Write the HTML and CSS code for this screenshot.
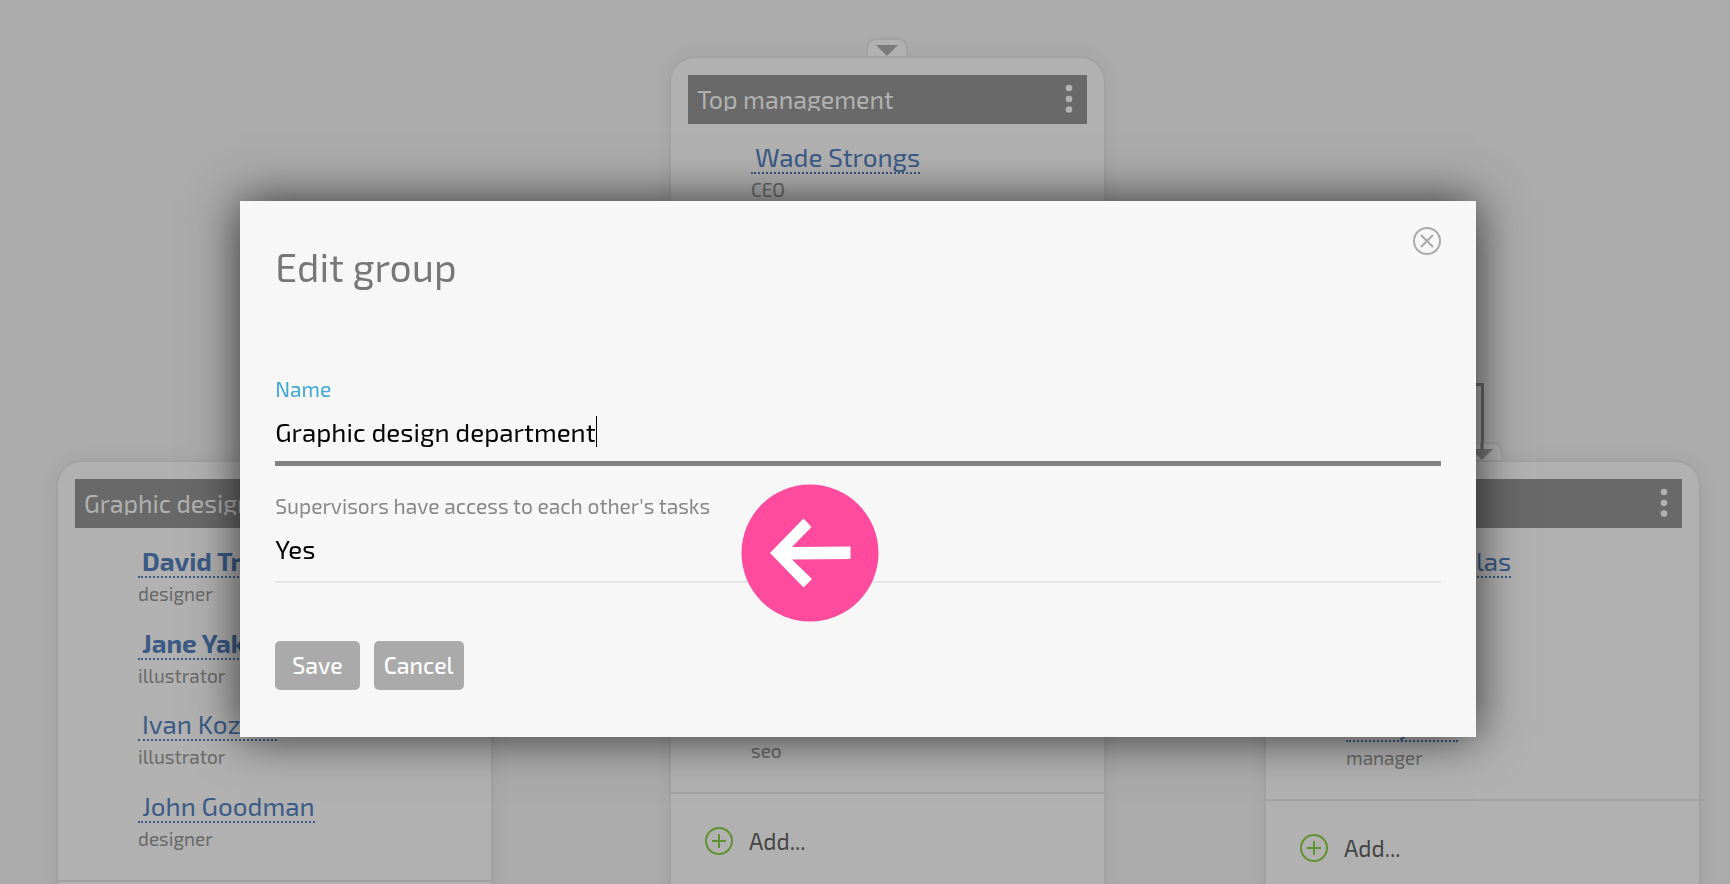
FILE: index.html
```
<!DOCTYPE html>
<html lang="en">
<head>
<meta charset="utf-8">
<meta name="viewport" content="width=device-width, initial-scale=1">
<title>Edit group</title>
<link rel="stylesheet" href="styles.css">
</head>
<body>
<main class="chart">
  <div class="connector"></div>

  <section class="group group-top">
    <svg class="group-tab" viewBox="0 0 42 18" aria-hidden="true"><path class="tab-shape" d="M1 18V11Q1 1 11 1H31Q41 1 41 11V18"/><path class="tab-arrow" d="M10 7H32L21 18Z"/></svg>
    <header class="group-head">
      <h2 class="group-title">Top management</h2>
      <button class="menu" type="button" aria-label="Group menu"><svg width="8" height="30" viewBox="0 0 8 30"><circle cx="4" cy="4" r="3.3"/><circle cx="4" cy="15" r="3.3"/><circle cx="4" cy="25.500" r="3.3"/></svg></button>
    </header>
    <ul class="members members-long">
      <li class="member"><a class="name" href="#">Wade Strongs</a><span class="role">CEO</span></li>
      <li class="member"><span class="role">seo</span></li>
    </ul>
    <button class="add" type="button"><svg width="28" height="28" viewBox="0 0 28 28" aria-hidden="true"><circle cx="14" cy="14" r="13"/><path d="M14 7V21M7 14H21"/></svg>Add...</button>
  </section>

  <section class="group group-left">
    <header class="group-head">
      <h2 class="group-title">Graphic design department</h2>
    </header>
    <ul class="members">
      <li class="member"><a class="name lead" href="#">David Tretiak</a><span class="role">designer</span></li>
      <li class="member"><a class="name lead" href="#">Jane Yakovleva</a><span class="role">illustrator</span></li>
      <li class="member"><a class="name" href="#">Ivan Kozlov</a><span class="role">illustrator</span></li>
      <li class="member"><a class="name" href="#">John Goodman</a><span class="role">designer</span></li>
    </ul>
    <div class="add"></div>
  </section>

  <section class="group group-right">
    <svg class="group-tab" viewBox="0 0 42 18" aria-hidden="true"><path class="tab-shape" d="M1 18V11Q1 1 11 1H31Q41 1 41 11V18"/><path class="tab-line" d="M21 0V8"/><path class="tab-arrow" d="M10 7H32L21 18Z"/></svg>
    <header class="group-head">
      <h2 class="group-title"></h2>
      <button class="menu" type="button" aria-label="Group menu"><svg width="8" height="30" viewBox="0 0 8 30"><circle cx="4" cy="4" r="3.3"/><circle cx="4" cy="15" r="3.3"/><circle cx="4" cy="25.500" r="3.3"/></svg></button>
    </header>
    <ul class="members members-mid">
      <li class="member"><a class="name" href="#">Helen Nicolas</a></li>
      <li class="member"><a class="name" href="#">Mary Lee</a><span class="role">manager</span></li>
    </ul>
    <button class="add" type="button"><svg width="28" height="28" viewBox="0 0 28 28" aria-hidden="true"><circle cx="14" cy="14" r="13"/><path d="M14 7V21M7 14H21"/></svg>Add...</button>
  </section>
</main>

<div class="overlay">
  <form class="dialog" role="dialog" aria-labelledby="dialog-title">
    <header class="dialog-head">
      <h1 class="dialog-title" id="dialog-title">Edit group</h1>
      <button class="close" type="button" aria-label="Close"><svg width="28" height="28" viewBox="0 0 28 28"><circle cx="14" cy="14" r="13"/><path d="M8 8L20 20M20 8L8 20"/></svg></button>
    </header>
    <div class="field field-active">
      <label class="label" for="group-name">Name</label>
      <input class="control control-text" id="group-name" type="text" value="Graphic design department">
    </div>
    <div class="field">
      <label class="label" for="group-access">Supervisors have access to each other's tasks</label>
      <select class="control control-select" id="group-access"><option>Yes</option></select>
      <svg class="pointer" viewBox="0 0 138 138" aria-hidden="true"><circle cx="69" cy="69" r="68.500"/><path d="M29 69L62.500 34.500L70.500 43L51 63L109.500 62.500V75L51 75.500L71 95L62.500 103.500Z"/></svg>
    </div>
    <footer class="actions">
      <button class="btn btn-save" type="submit">Save</button>
      <button class="btn" type="button">Cancel</button>
    </footer>
  </form>
</div>
</body>
</html>
```
FILE: styles.css
```
* { box-sizing: border-box; }

body {
  margin: 0;
  min-height: 100vh;
  overflow: hidden;
  background: #ababab;
  font-family: "Exo 2", "Open Sans", "Noto Sans", sans-serif;
  color: #444;
}

button, input, select { font: inherit; }
button { border: 0; background: none; padding: 0; cursor: pointer; }

.chart { position: relative; height: 100vh; overflow: hidden; }

.connector {
  position: absolute;
  left: 888px;
  top: 383px;
  width: 596px;
  height: 60px;
  border: solid #696969;
  border-width: 3px 3px 0 0;
}

.group {
  position: absolute;
  width: 437px;
  padding-bottom: 48px;
  background: #b1b1b1;
  border: 2px solid #a2a2a2;
  border-radius: 26px;
  box-shadow: 0 0 20px rgba(0, 0, 0, .05);
}
.group-top { left: 669px; top: 56px; }
.group-left { left: 56px; top: 460px; }
.group-right { left: 1264px; top: 460px; }

.group-tab {
  position: absolute;
  left: 195px;
  top: -20px;
  width: 42px;
  height: 18px;
}
.tab-shape { fill: #b1b1b1; stroke: #a2a2a2; stroke-width: 2; }
.tab-arrow { fill: #7a7a7a; }
.tab-line { stroke: #696969; stroke-width: 3; }

.group-head {
  display: flex;
  align-items: center;
  justify-content: space-between;
  height: 49px;
  margin: 17px 17px 0;
  padding: 0 14px 2px 9px;
  background: #696969;
}
.group-title {
  margin: 0;
  overflow: hidden;
  white-space: nowrap;
  font-size: 25px;
  font-weight: 400;
  line-height: 24px;
  color: #b1b1b1;
}
.menu { display: flex; fill: #b1b1b1; }

.members {
  display: flex;
  flex-direction: column;
  justify-content: space-between;
  height: 352px;
  margin: 0;
  padding: 18px 0 25px 80px;
  list-style: none;
}
.members-mid { height: 271px; }
.members-long { height: 668px; }

.member { display: flex; flex-direction: column; align-items: flex-start; }
.name {
  padding-left: 4px;
  border-bottom: 2px dotted #3b5a85;
  font-size: 26px;
  line-height: 30px;
  color: #3b5a85;
  text-decoration: none;
}
.lead { font-weight: 700; }
.role { font-size: 19px; line-height: 32px; color: #696969; }

.add {
  display: flex;
  align-items: center;
  gap: 16px;
  width: calc(100% + 4px);
  height: 96px;
  padding-left: 34px;
  border-top: 2px solid #a2a2a2;
  font-size: 23px;
  color: #444;
}
.add svg { fill: none; stroke: #5f9130; stroke-width: 2; }

.overlay {
  position: fixed;
  inset: 0;
  display: flex;
  justify-content: center;
  align-items: flex-start;
  padding: 201px 14px 0 0;
}
.dialog {
  width: 72%;
  padding: 26px 35px 47px;
  background: #f7f7f7;
  box-shadow: 0 0 45px rgba(0, 0, 0, .7);
}
.dialog-head {
  display: flex;
  justify-content: space-between;
  align-items: flex-start;
  height: 147px;
}
.dialog-title {
  margin: 12px 0 0;
  font-size: 39px;
  font-weight: 400;
  line-height: 56px;
  color: #777;
}
.close svg { display: block; fill: none; stroke: #aaa; stroke-width: 2; }

.field { position: relative; border-bottom: 2px solid #e6e6e6; }
.field-active { border-bottom: 5px solid #838383; margin-bottom: 25px; }
.label { display: block; font-size: 21px; line-height: 30px; color: #888; }
.field-active .label { color: #42a8d6; }
.control {
  display: block;
  padding: 0;
  border: 0;
  outline: 0;
  background: none;
  appearance: none;
  font-size: 26px;
  color: #000;
}
.control-text {
  field-sizing: content;
  max-width: 100%;
  height: 31px;
  margin: 12px 0 14px;
  border-right: 1px solid #000;
}
.control-select { width: 100%; height: 60px; padding-bottom: 6px; }
.pointer { position: absolute; left: 40%; top: -7px; width: 138px; height: 138px; }
.pointer circle { fill: #ff4b9e; }
.pointer path { fill: #fff; }

.actions { display: flex; gap: 14px; margin-top: 58px; }
.btn {
  height: 49px;
  padding: 0 10px 2px;
  border-radius: 5px;
  background: #aaa;
  font-size: 23px;
  font-weight: 500;
  color: #fff;
}
.btn-save { padding: 0 17px 2px; }
```
